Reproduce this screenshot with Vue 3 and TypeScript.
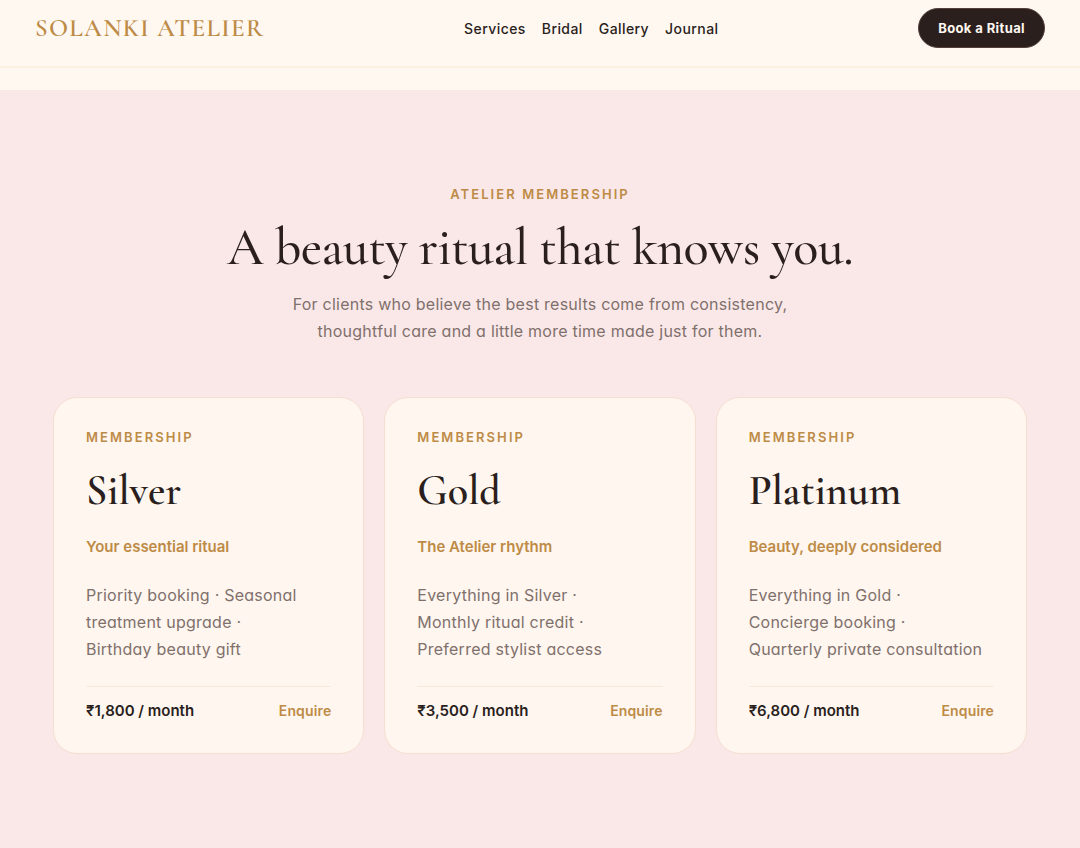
<script setup lang="ts">
interface Plan {
  name: string
  tagline: string
  perks: string[]
  price: string
}

const links: string[] = ['Services', 'Bridal', 'Gallery', 'Journal']

const plans: Plan[] = [
  {
    name: 'Silver',
    tagline: 'Your essential ritual',
    perks: ['Priority booking · Seasonal', 'treatment upgrade ·', 'Birthday beauty gift'],
    price: '₹1,800 / month',
  },
  {
    name: 'Gold',
    tagline: 'The Atelier rhythm',
    perks: ['Everything in Silver ·', 'Monthly ritual credit ·', 'Preferred stylist access'],
    price: '₹3,500 / month',
  },
  {
    name: 'Platinum',
    tagline: 'Beauty, deeply considered',
    perks: ['Everything in Gold ·', 'Concierge booking ·', 'Quarterly private consultation'],
    price: '₹6,800 / month',
  },
]
</script>

<template>
  <div class="page">
    <header class="bar">
      <a class="brand" href="#">SOLANKI ATELIER</a>
      <nav class="nav">
        <a v-for="l in links" :key="l" href="#">{{ l }}</a>
      </nav>
      <button class="book" type="button">Book a Ritual</button>
    </header>
    <main class="membership">
      <p class="eyebrow">ATELIER MEMBERSHIP</p>
      <h1>A beauty ritual that knows you.</h1>
      <p class="lead">
        For clients who believe the best results come from consistency,<br />
        thoughtful care and a little more time made just for them.
      </p>
      <section class="plans">
        <article v-for="p in plans" :key="p.name" class="card">
          <p class="eyebrow">MEMBERSHIP</p>
          <h2>{{ p.name }}</h2>
          <p class="tagline">{{ p.tagline }}</p>
          <p class="perks">
            <template v-for="(k, i) in p.perks" :key="k"><br v-if="i > 0" />{{ k }}</template>
          </p>
          <footer>
            <span class="price">{{ p.price }}</span>
            <a class="enquire" href="#">Enquire</a>
          </footer>
        </article>
      </section>
    </main>
  </div>
</template>

<style>
body {
  margin: 0;
  background: #fae8e8;
}
</style>

<style scoped>
.page {
  min-height: 100vh;
  background: #fae8e8;
  color: #2a1f1d;
  font-family: Inter, "Liberation Sans", sans-serif;
}
.page p,
.page h1,
.page h2 {
  margin: 0;
}
a {
  color: inherit;
  text-decoration: none;
}
.bar {
  display: flex;
  justify-content: space-between;
  align-items: center;
  box-sizing: border-box;
  height: 68px;
  padding: 0 35px 10px;
  background: #fff8f1;
  border-bottom: 2px solid #fcf0e2;
}
.brand {
  color: #bd8b46;
  font: 600 25px "Cormorant Garamond", "Liberation Serif", serif;
  letter-spacing: 0.05em;
}
.nav {
  display: flex;
  gap: 16px;
  font-size: 14px;
  font-weight: 500;
  letter-spacing: 0.03em;
}
.book {
  height: 40px;
  padding: 0 19px;
  border: 1px solid #54413c;
  border-radius: 20px;
  background: #2a1f1d;
  color: #fff7ef;
  font: 700 13px Inter, "Liberation Sans", sans-serif;
  letter-spacing: 0.03em;
}
.membership {
  border-top: 22px solid #fff8f0;
  padding: 95px 53px 94px;
  text-align: center;
}
.eyebrow {
  color: #bd8b46;
  font-size: 13px;
  font-weight: 600;
  line-height: 18px;
  letter-spacing: 0.16em;
}
h1 {
  padding-top: 14px;
  font: 500 52px/62px "Cormorant Garamond", "Liberation Serif", serif;
  letter-spacing: -0.01em;
}
.lead {
  padding-top: 12px;
  color: #80706c;
  font-size: 16px;
  line-height: 27px;
  letter-spacing: 0.015em;
  font-feature-settings: "cv11";
}
.plans {
  display: grid;
  grid-template-columns: repeat(3, 1fr);
  gap: 20px;
  padding-top: 52px;
  text-align: left;
}
.card {
  padding: 30px 32px;
  border: 1px solid #f5dfd2;
  border-radius: 24px;
  background: #fff6ef;
}
h2 {
  padding-top: 21px;
  font: 600 42px/48px "Cormorant Garamond", "Liberation Serif", serif;
}
.tagline {
  padding-top: 20px;
  color: #bd8b46;
  font-size: 15px;
  font-weight: 600;
  line-height: 24px;
}
.perks {
  padding: 23px 0;
  color: #80706c;
  font-size: 16px;
  line-height: 27px;
  letter-spacing: 0.015em;
  font-feature-settings: "cv11";
}
footer {
  display: flex;
  justify-content: space-between;
  align-items: center;
  padding-top: 12px;
  border-top: 1px solid #f8eadb;
  line-height: 24px;
}
.price {
  font-size: 15px;
  font-weight: 600;
}
.enquire {
  color: #bd8b46;
  font-size: 14px;
  font-weight: 600;
  letter-spacing: 0.01em;
}
</style>
